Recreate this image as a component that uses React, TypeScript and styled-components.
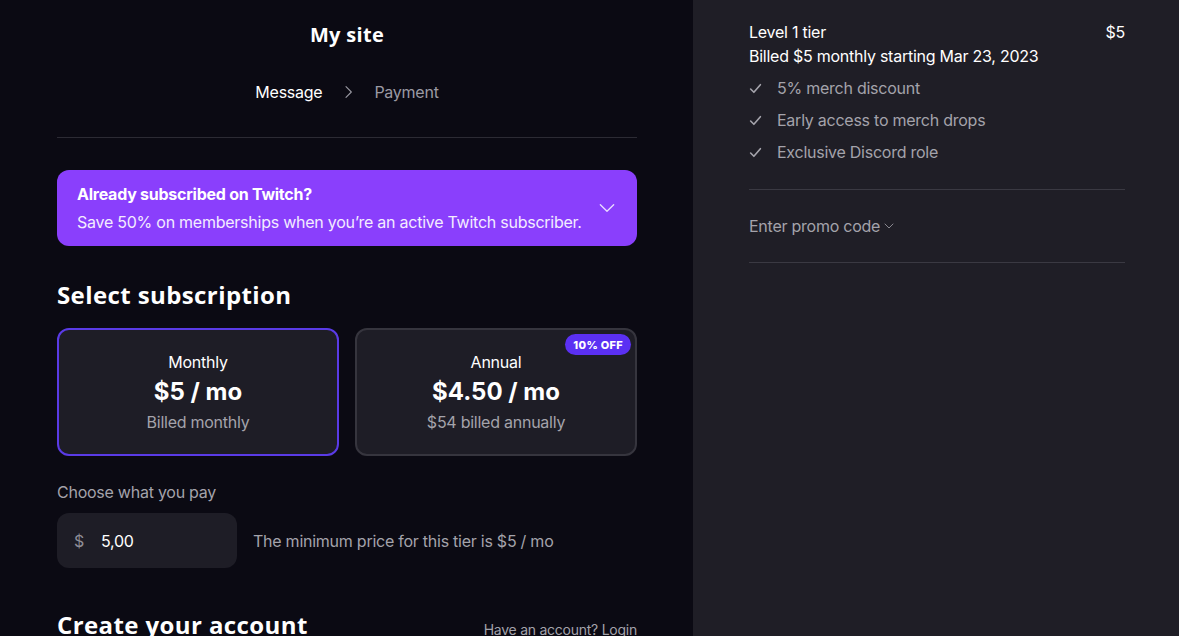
import React from 'react'
import styled, { createGlobalStyle } from 'styled-components'

const GlobalStyle = createGlobalStyle`
  html, body {
    margin: 0;
    padding: 0;
    background: #0b0a13;
  }
  body {
    font-family: Inter, "Liberation Sans", sans-serif;
    letter-spacing: -0.25px;
    color: #ffffff;
    -webkit-font-smoothing: antialiased;
  }
  * { box-sizing: border-box; }
`

const Page = styled.div`
  display: flex;
  width: 1179px;
  height: 636px;
  overflow: hidden;
`

const Main = styled.div`
  width: 693px;
  background: #0b0a13;
  padding: 0 56px 0 57px;
  display: flex;
  flex-direction: column;
`

const Side = styled.div`
  flex: 1;
  background: #1f1e26;
  padding: 21px 54px 0 56px;
  display: flex;
  flex-direction: column;
`

const SiteTitle = styled.h1`
  margin: 22px 0 0;
  text-align: center;
  font-family: "Open Sans", Lato, sans-serif;
  font-weight: 700;
  font-size: 20px;
  letter-spacing: 0.3px;
  line-height: 26px;
`

const Steps = styled.div`
  display: flex;
  justify-content: center;
  align-items: center;
  gap: 18px;
  margin-top: 34px;
  height: 22px;
`

const Step = styled.span<{ $active?: boolean }>`
  font-size: 16px;
  color: ${p => (p.$active ? '#ffffff' : '#9b9aa3')};
`

const Divider = styled.hr<{ $color?: string; $top?: number }>`
  border: 0;
  border-top: 1px solid ${p => p.$color || '#2c2b34'};
  margin: ${p => p.$top || 0}px 0 0;
  width: 100%;
`

const Banner = styled.div`
  margin-top: 32px;
  height: 76px;
  flex-shrink: 0;
  border-radius: 12px;
  background: #8a3ffc;
  padding: 0 20px;
  display: flex;
  align-items: center;
  justify-content: space-between;
`

const BannerText = styled.div`
  display: flex;
  flex-direction: column;
  gap: 6px;
`

const BannerTitle = styled.div`
  font-weight: 700;
  font-size: 16px;
  line-height: 22px;
`

const BannerSub = styled.div`
  font-size: 16px;
  line-height: 22px;
  color: #f3ecff;
`

const SectionTitle = styled.h2<{ $top?: number }>`
  margin: ${p => p.$top || 0}px 0 0;
  font-family: "Open Sans", Lato, sans-serif;
  font-weight: 700;
  font-size: 24px;
  letter-spacing: 0.4px;
  line-height: 32px;
`

const Cards = styled.div`
  display: grid;
  grid-template-columns: 1fr 1fr;
  gap: 16px;
  margin-top: 17px;
`

const PlanCard = styled.div<{ $selected?: boolean }>`
  position: relative;
  height: 128px;
  border-radius: 12px;
  background: #1e1d26;
  border: 2px solid ${p => (p.$selected ? '#5a3be6' : '#36353e')};
  display: flex;
  flex-direction: column;
  align-items: center;
  justify-content: center;
  gap: 3px;
`

const PlanName = styled.div`
  font-size: 16px;
  line-height: 22px;
`

const PlanPrice = styled.div`
  font-size: 24px;
  font-weight: 700;
  letter-spacing: 0;
  line-height: 32px;
`

const PlanNote = styled.div`
  font-size: 16px;
  line-height: 22px;
  color: #a4a3ab;
`

const Badge = styled.span`
  position: absolute;
  top: 4px;
  right: 4px;
  height: 21px;
  padding: 0 8px;
  border-radius: 11px;
  background: #5b30f3;
  font-size: 11px;
  font-weight: 800;
  letter-spacing: 0.3px;
  display: flex;
  align-items: center;
`

const PayLabel = styled.div`
  margin-top: 26px;
  font-size: 16px;
  line-height: 20px;
  color: #a4a3ab;
`

const PayRow = styled.div`
  display: flex;
  align-items: center;
  gap: 16px;
  margin-top: 11px;
`

const AmountBox = styled.div`
  width: 180px;
  height: 55px;
  border-radius: 12px;
  background: #1e1d26;
  display: flex;
  align-items: center;
  padding-left: 17px;
  gap: 17px;
  font-size: 16px;
`

const Currency = styled.span`
  color: #8f8e97;
`

const Hint = styled.span`
  font-size: 16px;
  color: #a4a3ab;
`

const AccountRow = styled.div`
  margin-top: 41px;
  display: flex;
  justify-content: space-between;
  align-items: center;
`

const LoginLink = styled.span`
  font-size: 14px;
  color: #a4a3ab;
  margin-top: 8px;
`

const TierRow = styled.div`
  display: flex;
  justify-content: space-between;
  font-size: 16px;
  line-height: 22px;
`

const Billed = styled.div`
  margin-top: 2px;
  font-size: 16px;
  line-height: 22px;
`

const Perks = styled.ul`
  list-style: none;
  margin: 10px 0 26px;
  padding: 0;
  display: flex;
  flex-direction: column;
  gap: 10px;
`

const Perk = styled.li`
  display: flex;
  align-items: center;
  gap: 15px;
  font-size: 16px;
  line-height: 22px;
  color: #a4a3ab;
`

const Promo = styled.div`
  display: flex;
  align-items: center;
  gap: 3px;
  height: 72px;
  font-size: 16px;
  color: #a4a3ab;
`

const Chevron = ({ dir, size, color }: { dir: 'down' | 'right'; size: number; color: string }) => (
  <svg width={size} height={size} viewBox="0 0 24 24" fill="none" stroke={color} strokeWidth={1.6} strokeLinecap="round" strokeLinejoin="round">
    {dir === 'down' ? <path d="M4 8l8 8 8-8" /> : <path d="M9 4l8 8-8 8" />}
  </svg>
)

const Check = () => (
  <svg width="13" height="13" viewBox="0 0 12 12" fill="none" stroke="#a4a3ab" strokeWidth={1.5} strokeLinecap="round" strokeLinejoin="round">
    <path d="M1.5 6.5l3 3 6-7" />
  </svg>
)

const perks = ['5% merch discount', 'Early access to merch drops', 'Exclusive Discord role']

export default function App() {
  return (
    <Page>
      <GlobalStyle />
      <Main>
        <SiteTitle>My site</SiteTitle>
        <Steps>
          <Step $active>Message</Step>
          <Chevron dir="right" size={16} color="#9b9aa3" />
          <Step>Payment</Step>
        </Steps>
        <Divider $top={35} />
        <Banner>
          <BannerText>
            <BannerTitle>Already subscribed on Twitch?</BannerTitle>
            <BannerSub>Save 50% on memberships when you’re an active Twitch subscriber.</BannerSub>
          </BannerText>
          <Chevron dir="down" size={20} color="#e9dcff" />
        </Banner>
        <SectionTitle $top={33}>Select subscription</SectionTitle>
        <Cards>
          <PlanCard $selected>
            <PlanName>Monthly</PlanName>
            <PlanPrice>$5 / mo</PlanPrice>
            <PlanNote>Billed monthly</PlanNote>
          </PlanCard>
          <PlanCard>
            <Badge>10% OFF</Badge>
            <PlanName>Annual</PlanName>
            <PlanPrice>$4.50 / mo</PlanPrice>
            <PlanNote>$54 billed annually</PlanNote>
          </PlanCard>
        </Cards>
        <PayLabel>Choose what you pay</PayLabel>
        <PayRow>
          <AmountBox>
            <Currency>$</Currency>
            <span>5,00</span>
          </AmountBox>
          <Hint>The minimum price for this tier is $5 / mo</Hint>
        </PayRow>
        <AccountRow>
          <SectionTitle>Create your account</SectionTitle>
          <LoginLink>Have an account? Login</LoginLink>
        </AccountRow>
      </Main>
      <Side>
        <TierRow>
          <span>Level 1 tier</span>
          <span>$5</span>
        </TierRow>
        <Billed>Billed $5 monthly starting Mar 23, 2023</Billed>
        <Perks>
          {perks.map(p => (
            <Perk key={p}>
              <Check />
              {p}
            </Perk>
          ))}
        </Perks>
        <Divider $color="#3a3942" />
        <Promo>
          Enter promo code
          <Chevron dir="down" size={12} color="#a4a3ab" />
        </Promo>
        <Divider $color="#3a3942" />
      </Side>
    </Page>
  )
}
